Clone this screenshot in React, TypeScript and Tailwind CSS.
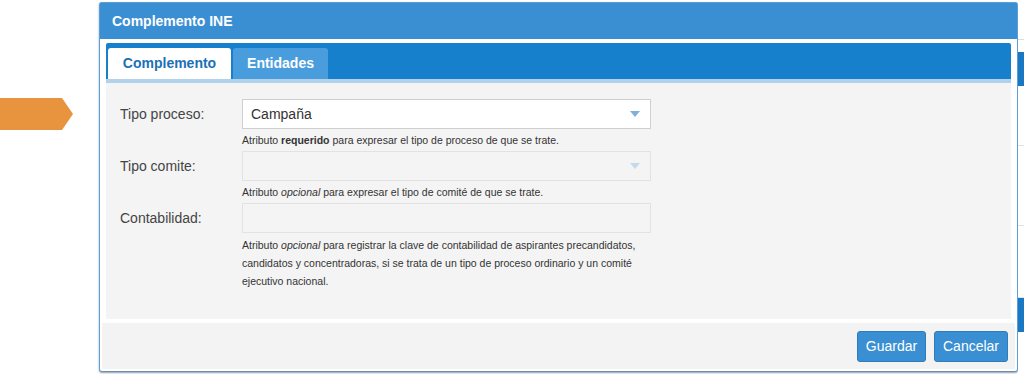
import React from "react";

const Caret = ({ light }: { light?: boolean }) => (
  <svg width="10" height="6" viewBox="0 0 10 6" className="absolute right-[10px] top-1/2 -translate-y-1/2">
    <path d="M0 0h10L5 6z" fill={light ? "#c3d9ec" : "#7fb0dc"} />
  </svg>
);

const Row = ({ label, children }: { label: string; children: React.ReactNode }) => (
  <div className="flex">
    <div className="w-[122px] shrink-0 h-[30px] flex items-center text-[14px] text-[#444]">{label}</div>
    <div className="w-[409px]">{children}</div>
  </div>
);

export default function App() {
  return (
    <div className="w-[1024px] h-[374px] bg-white flex overflow-hidden" style={{ fontFamily: '"Liberation Sans", Arial, sans-serif' }}>
      <div className="w-[99px] shrink-0 pt-[98px]">
        <svg width="74" height="32" viewBox="0 0 74 32">
          <path d="M0 0h62l11 16-11 16H0z" fill="#e8943f" />
        </svg>
      </div>

      <div className="w-[919px] h-[370px] mt-[2px] shrink-0 flex flex-col border border-[#5c9ed8] border-b-[#6f8fb0] rounded-[3px] shadow-[0_1px_2px_rgba(60,90,130,0.6)] bg-white">
        <div className="h-[36px] bg-[#3a8fd3] px-[12px] flex items-center text-white font-bold text-[14px]">Complemento INE</div>

        <div className="flex-1 flex flex-col px-[6px] pt-[4px] bg-white">
          <div className="flex flex-col">
            <div className="h-[36px] bg-[#1680cc] flex items-end pl-[2px] gap-[2px] rounded-t-[2px]">
              <div className="w-[123px] h-[31px] bg-white rounded-t-[3px] flex items-center justify-center text-[14px] font-bold text-[#1b70b6]">Complemento</div>
              <div className="w-[95px] h-[31px] bg-[#4a9ddc] rounded-t-[3px] flex items-center justify-center text-[14px] font-bold text-white">Entidades</div>
            </div>
            <div className="h-[4px] bg-[#b2d2ec]" />
          </div>

          <div className="h-[236px] bg-[#f4f4f4] pl-[14px] pt-[16px] text-[#333]">
            <Row label="Tipo proceso:">
              <div className="relative h-[30px] bg-white border border-[#cfcfcf] flex items-center pl-[8px] text-[14px] text-[#333]">
                Campaña
                <Caret />
              </div>
            </Row>
            <div className="ml-[122px] mt-[4px] mb-[4px] leading-[14px] text-[10.5px]">
              Atributo <b>requerido</b> para expresar el tipo de proceso de que se trate.
            </div>
            <Row label="Tipo comite:">
              <div className="relative h-[30px] bg-[#f4f4f4] border border-[#e2e2e2]">
                <Caret light />
              </div>
            </Row>
            <div className="ml-[122px] mt-[4px] mb-[4px] leading-[14px] text-[10.5px]">
              Atributo <i>opcional</i> para expresar el tipo de comité de que se trate.
            </div>
            <Row label="Contabilidad:">
              <div className="h-[30px] bg-[#f4f4f4] border border-[#e2e2e2]" />
            </Row>
            <div className="ml-[122px] mt-[3px] w-[426px] leading-[18px] text-[10.5px]">
              Atributo <i>opcional</i> para registrar la clave de contabilidad de aspirantes precandidatos, candidatos y concentradoras, si se trata de un tipo de proceso ordinario y un comité ejecutivo nacional.
            </div>
          </div>
          <div className="h-[4px]" />
        </div>

        <div className="h-[46px] bg-[#f3f3f3] mx-[2px] mb-[2px] flex items-center justify-end gap-[8px] pr-[7px]">
          <button className="h-[31px] w-[69px] bg-[#3a8fd3] border border-[#2b7cc0] rounded-[3px] text-white text-[14px]">Guardar</button>
          <button className="h-[31px] w-[74px] bg-[#3a8fd3] border border-[#2b7cc0] rounded-[3px] text-white text-[14px]">Cancelar</button>
        </div>
      </div>

      <div className="flex-1 flex flex-col bg-white">
        <div className="h-[40px] border-b border-[#ddd]" />
        <div className="h-[34px] bg-[#1a78c2] mt-[12px]" />
        <div className="h-[60px] border-b border-[#e3e3e3]" />
        <div className="h-[80px] border-b border-[#e3e3e3]" />
        <div className="h-[72px] border-b border-[#e3e3e3]" />
        <div className="h-[34px] bg-[#1a78c2]" />
      </div>
    </div>
  );
}
